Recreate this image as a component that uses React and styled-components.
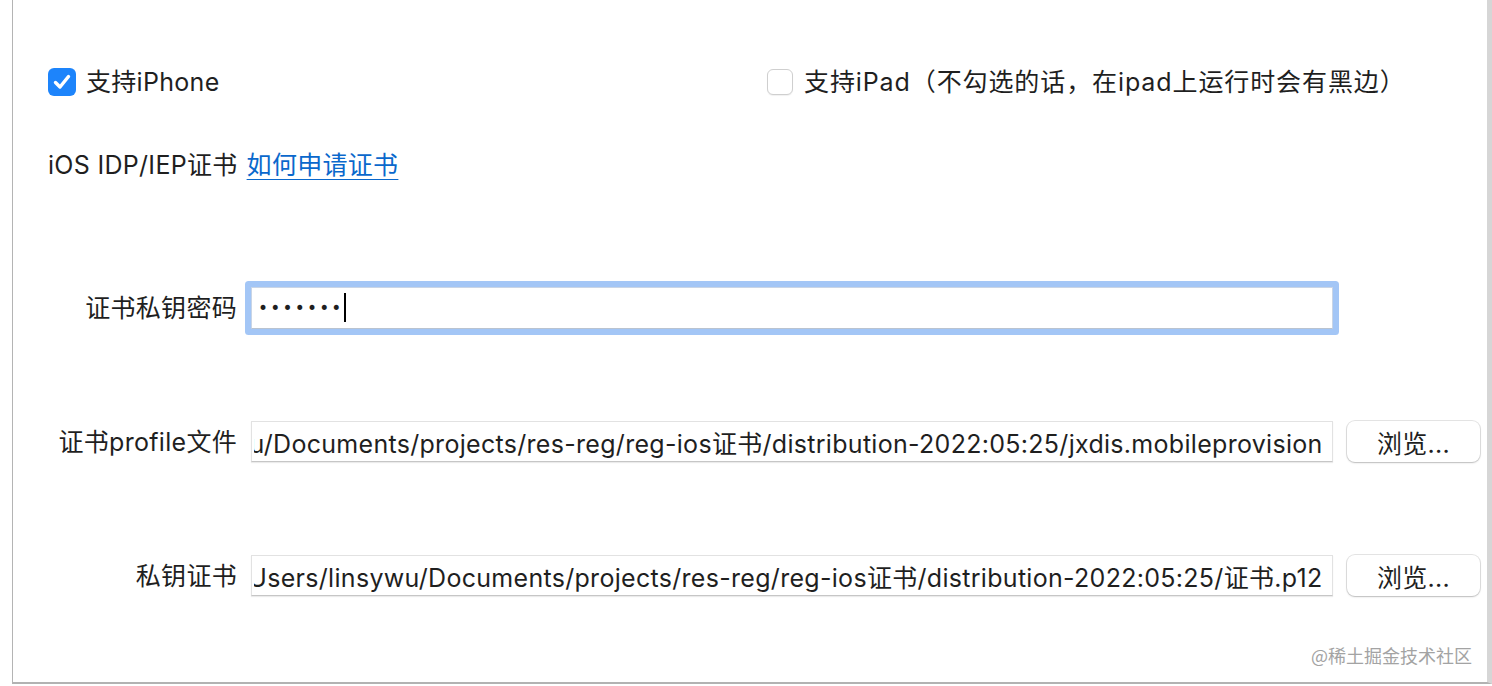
import React, { useEffect, useRef } from "react";
import styled, { createGlobalStyle } from "styled-components";

const Global = createGlobalStyle`
  html, body { margin: 0; padding: 0; background: #ffffff; }
  body {
    font-family: Inter, "Noto Sans CJK SC", sans-serif;
    color: #1f1f1f;
  }
`;

const Page = styled.div`
  width: 1492px;
  height: 686px;
  background: #ffffff;
  display: flex;
`;

const Panel = styled.div`
  position: relative;
  margin-left: 12px;
  flex: 1;
  height: 684px;
  border-left: 1px solid #b4b4b4;
  border-right: 5px solid #d6d6d6;
  border-bottom: 2px solid #b2b2b2;
  background: #ffffff;
  padding: 68px 0 0 35px;
  box-sizing: border-box;
`;

const CheckRow = styled.div`
  display: grid;
  grid-template-columns: 719px auto;
  align-items: center;
  height: 28px;
`;

const Option = styled.label`
  display: flex;
  align-items: center;
  gap: ${(p) => (p.$checked ? "10px" : "11px")};
  font-size: 25px;
  letter-spacing: ${(p) => (p.$checked ? "0.3px" : "0.9px")};
  line-height: 28px;
  white-space: nowrap;
`;

const Box = styled.span`
  width: ${(p) => (p.$checked ? "28px" : "26px")};
  height: ${(p) => (p.$checked ? "28px" : "26px")};
  box-sizing: border-box;
  border-radius: 6px;
  display: flex;
  align-items: center;
  justify-content: center;
  background: ${(p) => (p.$checked ? "#1d84fb" : "#ffffff")};
  border: ${(p) => (p.$checked ? "none" : "1px solid #cfcfcf")};
  box-shadow: ${(p) => (p.$checked ? "none" : "0 1px 1px rgba(0,0,0,0.06)")};
`;

const CertRow = styled.div`
  margin-top: 55px;
  font-size: 25px;
  letter-spacing: 0.3px;
  line-height: 28px;
  display: flex;
  gap: 9px;
`;

const Link = styled.a`
  color: #0a68cc;
  text-decoration: underline;
  text-underline-offset: 5px;
  text-decoration-thickness: 1px;
  cursor: pointer;
`;

const Form = styled.div`
  margin-top: 108px;
  display: grid;
  grid-template-columns: 189px 1082px 133px;
  grid-auto-rows: 41px;
  column-gap: 14px;
  row-gap: 93px;
  align-items: center;
`;

const FieldLabel = styled.div`
  text-align: right;
  font-size: 25px;
  letter-spacing: 0.3px;
  line-height: 28px;
  white-space: nowrap;
`;

const PasswordField = styled.div`
  height: 42px;
  box-sizing: border-box;
  border: 1px solid #c9d5e6;
  border-bottom-color: #b9c3d0;
  border-radius: 1px;
  background: #ffffff;
  box-shadow: 0 0 0 6px #a3c6f6;
  display: flex;
  align-items: center;
  padding-left: 6px;
`;

const Dots = styled.span`
  font-size: 17px;
  letter-spacing: 2.2px;
  color: #1f1f1f;
  font-family: "DejaVu Sans", sans-serif;
`;

const Caret = styled.span`
  width: 2px;
  height: 29px;
  background: #000;
  margin-left: 0px;
`;

const PathInput = styled.input`
  height: 41px;
  width: 100%;
  box-sizing: border-box;
  border: 1px solid #e2e2e2;
  border-bottom-color: #c6c6c6;
  border-radius: 0;
  box-shadow: 0 1px 1px rgba(0, 0, 0, 0.08);
  background: #ffffff;
  outline: none;
  padding: 0 9px 0 2px;
  font-family: Inter, "Noto Sans CJK SC", sans-serif;
  font-size: 25px;
  letter-spacing: 0.3px;
  color: #1f1f1f;
`;

const Browse = styled.button`
  height: 41px;
  width: 133px;
  border: none;
  border-radius: 8px;
  background: #ffffff;
  box-shadow: 0 0 0 1px rgba(0, 0, 0, 0.1), 0 1px 2px rgba(0, 0, 0, 0.18);
  font-family: Inter, "Noto Sans CJK SC", sans-serif;
  font-size: 25px;
  letter-spacing: 0.3px;
  color: #1f1f1f;
  padding: 0;
  cursor: pointer;
`;

const Watermark = styled.div`
  position: absolute;
  right: 15px;
  bottom: 17px;
  font-size: 18px;
  line-height: 20px;
  color: #a3a3a3;
  font-family: "Noto Sans CJK SC", sans-serif;
`;

const Check = () => (
  <svg width="18" height="16" viewBox="0 0 18 16">
    <path
      d="M2.5 8.5 L7 13 L15.5 2.5"
      fill="none"
      stroke="#ffffff"
      strokeWidth="3.4"
      strokeLinecap="round"
      strokeLinejoin="round"
    />
  </svg>
);

const CheckOption = ({ checked, children }) => (
  <Option $checked={checked}>
    <Box $checked={checked}>{checked && <Check />}</Box>
    <span>{children}</span>
  </Option>
);

const PathField = ({ value }) => {
  const ref = useRef(null);
  useEffect(() => {
    if (ref.current) ref.current.scrollLeft = ref.current.scrollWidth;
  }, [value]);
  return <PathInput ref={ref} readOnly value={value} />;
};

export default function App() {
  return (
    <>
      <Global />
      <Page>
        <Panel>
          <CheckRow>
            <CheckOption checked>支持iPhone</CheckOption>
            <CheckOption checked={false}>
              支持iPad（不勾选的话，在ipad上运行时会有黑边）
            </CheckOption>
          </CheckRow>
          <CertRow>
            <span>iOS IDP/IEP证书</span>
            <Link>如何申请证书</Link>
          </CertRow>
          <Form>
            <FieldLabel>证书私钥密码</FieldLabel>
            <PasswordField>
              <Dots>•••••••</Dots>
              <Caret />
            </PasswordField>
            <div />
            <FieldLabel>证书profile文件</FieldLabel>
            <PathField value="/Users/linsywu/Documents/projects/res-reg/reg-ios证书/distribution-2022:05:25/jxdis.mobileprovision" />
            <Browse>浏览...</Browse>
            <FieldLabel>私钥证书</FieldLabel>
            <PathField value="/Users/linsywu/Documents/projects/res-reg/reg-ios证书/distribution-2022:05:25/证书.p12" />
            <Browse>浏览...</Browse>
          </Form>
          <Watermark>@稀土掘金技术社区</Watermark>
        </Panel>
      </Page>
    </>
  );
}
